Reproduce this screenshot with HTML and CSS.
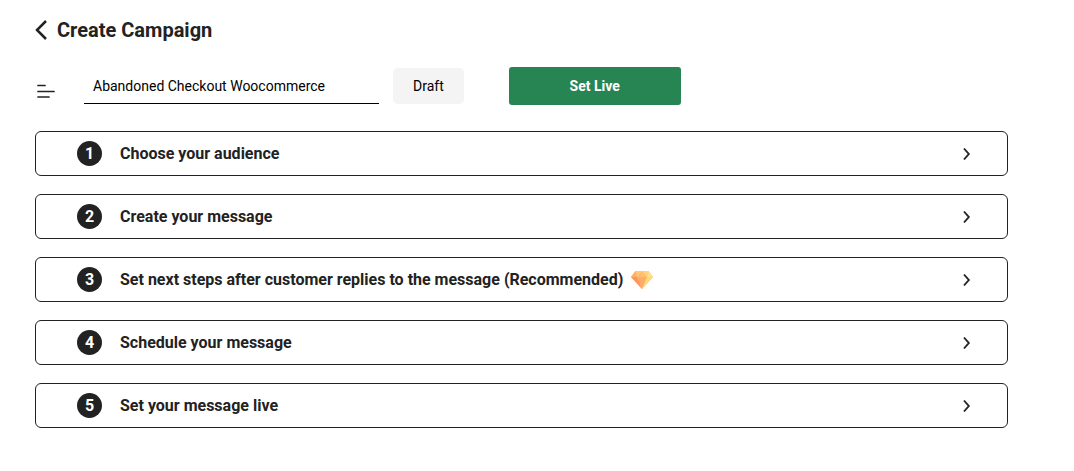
FILE: index.html
```html
<!DOCTYPE html>
<html lang="en">
<head>
<meta charset="utf-8">
<meta name="viewport" content="width=device-width, initial-scale=1">
<title>Create Campaign</title>
<link rel="stylesheet" href="styles.css">
</head>
<body>
<svg class="sprite" aria-hidden="true">
  <symbol id="chevron" viewBox="0 0 8 14"><path d="M1 1.500 5.800 7 1 12.500" fill="none" stroke="currentColor" stroke-width="1.9"/></symbol>
</svg>
<main class="page">
  <header class="page-header">
    <button class="back" type="button" aria-label="Back">
      <svg width="12" height="20" viewBox="0 0 12 20"><path d="M11 1 2 10l9 9" fill="none" stroke="currentColor" stroke-width="2.5"/></svg>
    </button>
    <h1 class="title">Create Campaign</h1>
  </header>

  <div class="toolbar">
    <button class="menu" type="button" aria-label="Menu">
      <svg width="19" height="14" viewBox="0 0 19 14"><path d="M2 1.500h7M2 7.500h16M2 13h11" fill="none" stroke="currentColor" stroke-width="1.700" stroke-linecap="round"/></svg>
    </button>
    <input class="name" type="text" aria-label="Campaign name" value="Abandoned Checkout Woocommerce">
    <span class="status">Draft</span>
    <button class="set-live" type="button">Set Live</button>
  </div>

  <ol class="steps">
    <li><button class="step" type="button">
      <span class="number">1</span><span class="label">Choose your audience</span>
      <svg class="chevron" aria-hidden="true"><use href="#chevron"/></svg>
    </button></li>
    <li><button class="step" type="button">
      <span class="number">2</span><span class="label">Create your message</span>
      <svg class="chevron" aria-hidden="true"><use href="#chevron"/></svg>
    </button></li>
    <li><button class="step" type="button">
      <span class="number">3</span><span class="label">Set next steps after customer replies to the message (Recommended)
      <svg class="gem" viewBox="0 0 22 18" aria-hidden="true">
        <path d="M4.500 0h13L22 6 11 18 0 6z" fill="#ffb46b"/>
        <path d="M4.500 0 0 6h6z" fill="#ffb066"/>
        <path d="M4.500 0H11L6 6z" fill="#ffc67c"/>
        <path d="M11 0 6 6h10z" fill="#ffbd70"/>
        <path d="M11 0h6.500L16 6z" fill="#ffd27c"/>
        <path d="M17.500 0 22 6h-6z" fill="#ffe08a"/>
        <path d="M0 6h6l5 12z" fill="#ff9460"/>
        <path d="M6 6h10l-5 12z" fill="#ffac68"/>
        <path d="M16 6h6L11 18z" fill="#ffd978"/>
      </svg></span>
      <svg class="chevron" aria-hidden="true"><use href="#chevron"/></svg>
    </button></li>
    <li><button class="step" type="button">
      <span class="number">4</span><span class="label">Schedule your message</span>
      <svg class="chevron" aria-hidden="true"><use href="#chevron"/></svg>
    </button></li>
    <li><button class="step" type="button">
      <span class="number">5</span><span class="label">Set your message live</span>
      <svg class="chevron" aria-hidden="true"><use href="#chevron"/></svg>
    </button></li>
  </ol>
</main>
</body>
</html>
```

FILE: styles.css
```css
* {
  box-sizing: border-box;
}

body {
  margin: 0;
  background: #fff;
  color: #222;
  font-family: Roboto, "Liberation Sans", sans-serif;
}

button,
input {
  font: inherit;
  color: inherit;
}

button {
  cursor: pointer;
}

.sprite {
  display: none;
}

.page {
  padding: 18px 66px 40px 35px;
}

.page-header {
  display: flex;
  align-items: center;
  gap: 10px;
}

.back,
.menu {
  display: flex;
  padding: 0;
  border: 0;
  background: none;
}

.title {
  margin: 0;
  font-size: 20px;
  line-height: 24px;
  font-weight: 700;
}

.toolbar {
  display: flex;
  align-items: center;
  margin-top: 25px;
  font-size: 14px;
  color: #000;
}

.menu {
  margin: 10px 29px 0 1px;
  color: #222;
}

.name {
  flex: 0 1 295px;
  min-width: 0;
  height: 36px;
  margin-right: 14px;
  padding: 0 9px;
  border: 0;
  border-bottom: 1px solid #000;
  border-radius: 0;
  background: none;
}

.status {
  margin-right: 45px;
  padding: 8px 20px;
  border-radius: 5px;
  background: #f4f4f4;
  line-height: 20px;
}

.set-live {
  flex: 0 1 172px;
  padding: 9px 12px;
  border: 0;
  border-radius: 3px;
  background: #278453;
  color: #fff;
  font-weight: 700;
  line-height: 20px;
}

.steps {
  display: grid;
  gap: 18px;
  margin: 26px 0 0;
  padding: 0;
  list-style: none;
}

.step {
  display: flex;
  align-items: center;
  width: 100%;
  padding: 9px 36px 9px 41px;
  border: 1px solid #222;
  border-radius: 6px;
  background: #fff;
  text-align: left;
  font-size: 16px;
  line-height: 25px;
  font-weight: 700;
}

.number {
  flex: none;
  width: 25px;
  margin-right: 18px;
  border-radius: 50%;
  background: #222;
  color: #fff;
  text-align: center;
}

.label {
  flex: 1;
}

.gem {
  width: 22px;
  height: 18px;
  margin-left: 4px;
  vertical-align: -4px;
}

.chevron {
  flex: none;
  width: 8px;
  height: 14px;
}
```
